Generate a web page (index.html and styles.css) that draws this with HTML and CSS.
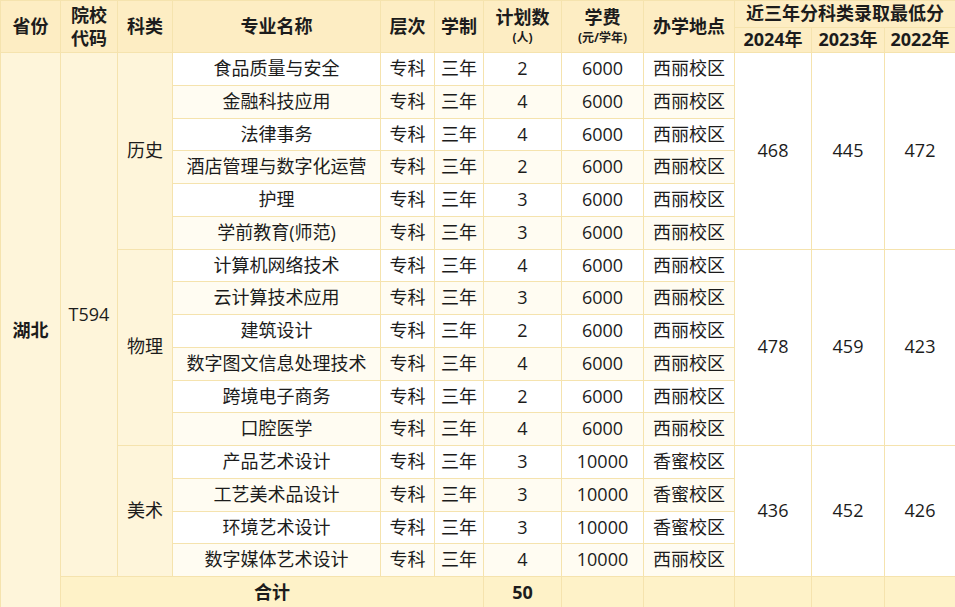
FILE: index.html
```html
<!DOCTYPE html>
<html lang="zh-CN">
<head>
  <meta charset="UTF-8" />
  <title>湖北招生计划</title>
  <link rel="stylesheet" href="styles.css">
</head>
<body>
  <table class="plan">
    <colgroup>
      <col style="width:60px"><col style="width:57px"><col style="width:55px"><col style="width:208px">
      <col style="width:54px"><col style="width:49px"><col style="width:78px"><col style="width:82px">
      <col style="width:91px"><col style="width:77px"><col style="width:73px"><col style="width:71px">
    </colgroup>
    <thead>
      <tr class="head-top">
        <th rowspan="2">省份</th>
        <th rowspan="2" class="two-line">院校<br>代码</th>
        <th rowspan="2">科类</th>
        <th rowspan="2">专业名称</th>
        <th rowspan="2">层次</th>
        <th rowspan="2">学制</th>
        <th rowspan="2" class="two-line">计划数<span class="sub">(人)</span></th>
        <th rowspan="2" class="two-line">学费<span class="sub">(元/学年)</span></th>
        <th rowspan="2">办学地点</th>
        <th colspan="3">近三年分科类录取最低分</th>
      </tr>
      <tr class="head-bottom">
        <th>2024年</th>
        <th>2023年</th>
        <th>2022年</th>
      </tr>
    </thead>
    <tbody>
      <tr>
        <td rowspan="17" class="side bold">湖北</td>
        <td rowspan="16" class="side">T594</td>
        <td rowspan="6" class="side">历史</td>
        <td>食品质量与安全</td><td>专科</td><td>三年</td><td>2</td><td>6000</td><td>西丽校区</td>
        <td rowspan="6" class="score">468</td><td rowspan="6" class="score">445</td><td rowspan="6" class="score">472</td>
      </tr>
      <tr class="alt"><td>金融科技应用</td><td>专科</td><td>三年</td><td>4</td><td>6000</td><td>西丽校区</td></tr>
      <tr><td>法律事务</td><td>专科</td><td>三年</td><td>4</td><td>6000</td><td>西丽校区</td></tr>
      <tr class="alt"><td>酒店管理与数字化运营</td><td>专科</td><td>三年</td><td>2</td><td>6000</td><td>西丽校区</td></tr>
      <tr><td>护理</td><td>专科</td><td>三年</td><td>3</td><td>6000</td><td>西丽校区</td></tr>
      <tr class="alt"><td>学前教育(师范)</td><td>专科</td><td>三年</td><td>3</td><td>6000</td><td>西丽校区</td></tr>
      <tr>
        <td rowspan="6" class="side">物理</td>
        <td>计算机网络技术</td><td>专科</td><td>三年</td><td>4</td><td>6000</td><td>西丽校区</td>
        <td rowspan="6" class="score">478</td><td rowspan="6" class="score">459</td><td rowspan="6" class="score">423</td>
      </tr>
      <tr class="alt"><td>云计算技术应用</td><td>专科</td><td>三年</td><td>3</td><td>6000</td><td>西丽校区</td></tr>
      <tr><td>建筑设计</td><td>专科</td><td>三年</td><td>2</td><td>6000</td><td>西丽校区</td></tr>
      <tr class="alt"><td>数字图文信息处理技术</td><td>专科</td><td>三年</td><td>4</td><td>6000</td><td>西丽校区</td></tr>
      <tr><td>跨境电子商务</td><td>专科</td><td>三年</td><td>2</td><td>6000</td><td>西丽校区</td></tr>
      <tr class="alt"><td>口腔医学</td><td>专科</td><td>三年</td><td>4</td><td>6000</td><td>西丽校区</td></tr>
      <tr>
        <td rowspan="4" class="side">美术</td>
        <td>产品艺术设计</td><td>专科</td><td>三年</td><td>3</td><td>10000</td><td>香蜜校区</td>
        <td rowspan="4" class="score">436</td><td rowspan="4" class="score">452</td><td rowspan="4" class="score">426</td>
      </tr>
      <tr class="alt"><td>工艺美术品设计</td><td>专科</td><td>三年</td><td>3</td><td>10000</td><td>香蜜校区</td></tr>
      <tr><td>环境艺术设计</td><td>专科</td><td>三年</td><td>3</td><td>10000</td><td>香蜜校区</td></tr>
      <tr class="alt"><td>数字媒体艺术设计</td><td>专科</td><td>三年</td><td>4</td><td>10000</td><td>西丽校区</td></tr>
      <tr class="total">
        <td colspan="5" class="bold">合计</td>
        <td class="bold">50</td>
        <td></td><td></td><td></td><td></td><td></td>
      </tr>
    </tbody>
  </table>
</body>
</html>
```

FILE: styles.css
```css
body {
  margin: 0;
  background: #fef2c8;
  font-family: "Open Sans", "Noto Sans CJK SC", sans-serif;
  color: #1c1c1c;
  overflow: hidden;
}
.plan {
  width: 955px;
  table-layout: fixed;
  border-collapse: collapse;
  font-size: 18px;
}
.plan th,
.plan td {
  border: 1px solid #f5e3ae;
  text-align: center;
  vertical-align: middle;
  padding: 0;
  white-space: nowrap;
  line-height: 1.2;
}
.plan th {
  background: #fdedc3;
  font-weight: bold;
}
.head-top {
  height: 27px;
}
.head-bottom {
  height: 25px;
}
.plan th.two-line {
  line-height: 1.25;
}
.sub {
  display: block;
  font-size: 12px;
  line-height: 1.6;
}
.plan tbody tr {
  height: 32.75px;
  background: #ffffff;
}
.plan tbody tr.alt {
  background: #fffcf2;
}
.plan td.side {
  background: #fef5da;
}
.plan td.score {
  background: #ffffff;
}
.bold {
  font-weight: bold;
}
.plan tr.total {
  height: 32px;
  background: #fef2c8;
}
.plan tr.total td {
  background: #fef2c8;
}
```
